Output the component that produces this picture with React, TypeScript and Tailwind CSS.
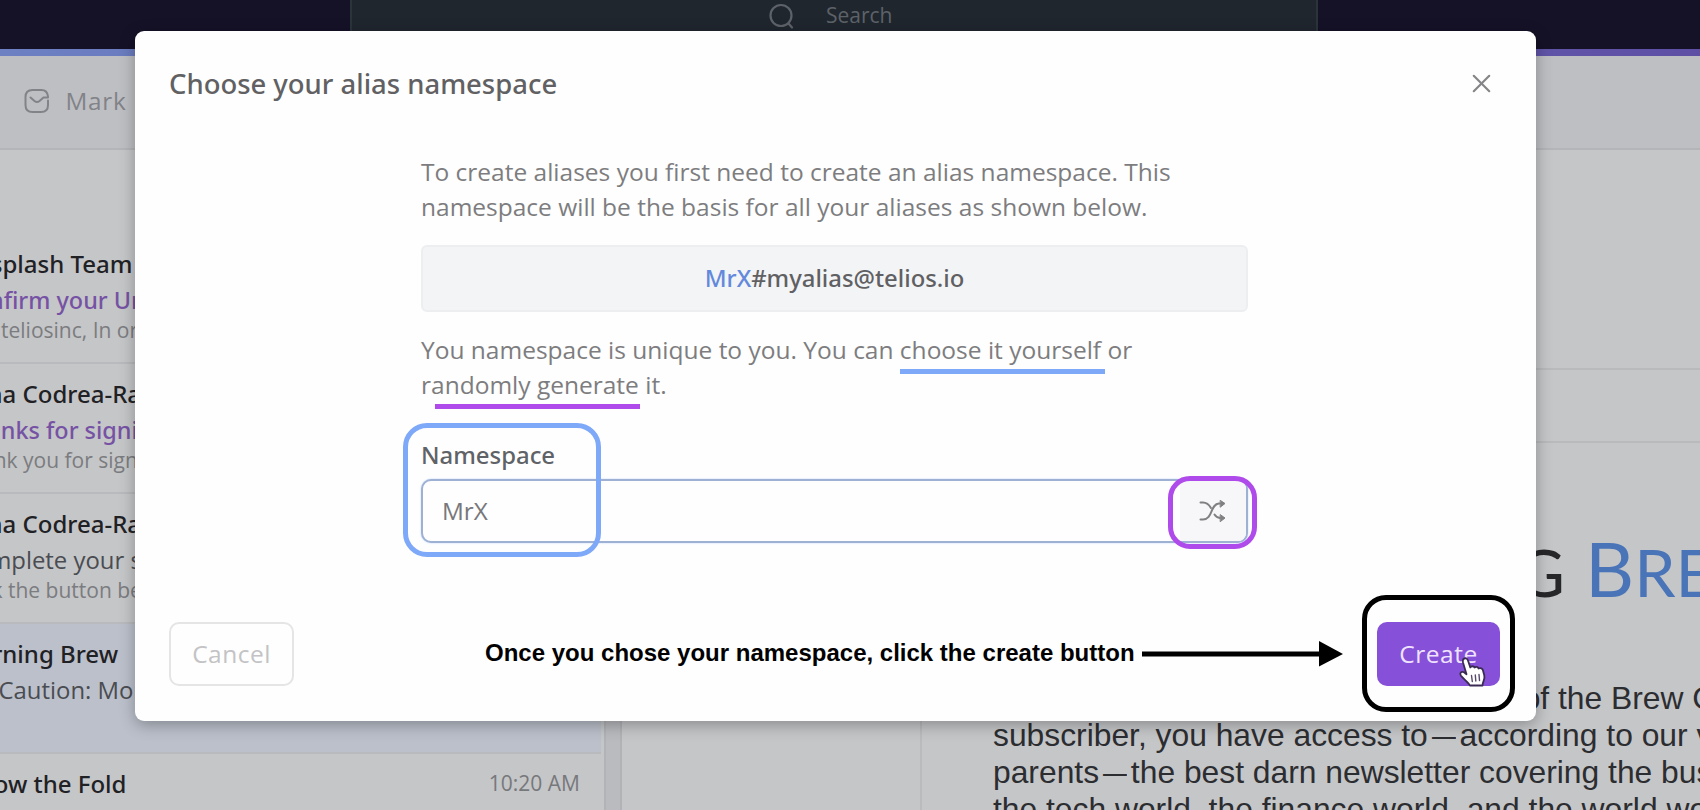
import type { ReactNode } from "react";
import { X } from "lucide-react";

type Line = { before: string; text: string; x: number };
type Message = { sender: Line; subject: Line; preview?: Line; unread?: boolean; selected?: boolean; time?: string };

const messages: Message[] = [
  {
    sender: { before: "Unsplash ", text: "Team", x: 70.5 },
    subject: { before: "Confirm ", text: "your Unsplash account", x: 56.5 },
    preview: { before: "Hi ", text: "teliosinc, In order to", x: 1 },
    unread: true,
  },
  {
    sender: { before: "Ioana ", text: "Codrea-Raducanu", x: 22.5 },
    subject: { before: "Thanks ", text: "for signing up", x: 46 },
    preview: { before: "Thank ", text: "you for signing up", x: 23 },
    unread: true,
  },
  {
    sender: { before: "Ioana ", text: "Codrea-Raducanu", x: 22.5 },
    subject: { before: "Complete ", text: "your signup", x: 73.5 },
    preview: { before: "Click ", text: "the button below", x: 8 },
  },
  {
    sender: { before: "Morning ", text: "Brew", x: 60 },
    subject: { before: "☕ ", text: "Caution: More", x: -1.5 },
    selected: true,
  },
  {
    sender: { before: "Below ", text: "the Fold", x: 33.5 },
    subject: { before: "Sun", text: "day clicks, entertainment for S", x: 36 },
    time: "10:20 AM",
  },
];

function ClippedLine({ line, className }: { line: Line; className: string }) {
  return (
    <div className={`flex whitespace-pre ${className}`}>
      <span className="flex shrink-0 justify-end" style={{ width: Math.max(line.x, 0), marginLeft: Math.min(line.x, 0) }}>
        {line.before}
      </span>
      <span>{line.text}</span>
    </div>
  );
}

function MessageRow({ message }: { message: Message }) {
  const background = message.selected ? "bg-[#bbc0cb]" : "bg-[#c5c6c8]";
  const subject = message.unread ? "font-['Noto_Sans'] text-[23.400px] font-medium text-[#7652a4]" : "text-[23.900px] text-[#4a4c51]";
  return (
    <div className={`flex h-[130px] w-[601px] shrink-0 justify-between border-b-2 border-[#b8babd] pt-[12px] ${background}`}>
      <div className="min-w-0">
        <ClippedLine line={message.sender} className="h-9 font-['Noto_Sans'] text-[24px] leading-9 font-medium text-[#1f2124]" />
        <ClippedLine line={message.subject} className={`mt-px h-[34px] leading-[34px] ${subject}`} />
        {message.preview && <ClippedLine line={message.preview} className="mt-px h-6 text-[21px] leading-6 text-[#7b7c7f]" />}
      </div>
      {message.time && <span className="-mt-px shrink-0 pr-[21px] text-[21px] leading-9 whitespace-nowrap text-[#77787b]">{message.time}</span>}
    </div>
  );
}

function Mailbox() {
  return (
    <div className="flex h-[810px] w-[1700px] flex-col overflow-hidden bg-[#c5c6c8]">
      <header className="flex h-[49px] shrink-0 justify-center bg-[#151127] pr-[32px]">
        <div className="flex h-full w-[968px] border-x-2 border-[#2b333b] bg-[#20262e] pl-[416px]">
          <svg className="mt-[3px] h-[26px] w-[27px] shrink-0" viewBox="0 0 27 26" fill="none" stroke="#5d6269" strokeWidth="2.2" strokeLinecap="round">
            <circle cx="13" cy="12.5" r="10.5" />
            <path d="M20.5 20.5 24 24.5" />
          </svg>
          <span className="mt-[1px] ml-[31px] text-[21px] leading-[28px] text-[#5d6269]">Search</span>
        </div>
      </header>
      <div className="h-[7px] shrink-0 bg-linear-to-r from-[#6c80c2] to-[#5e4fa5]" />
      <div className="flex h-[94px] shrink-0 items-center border-b-2 border-[#b4b5b9] bg-[#bebfc3] pb-[2px] pl-[24px]">
        <svg className="h-[26px] w-[26px]" viewBox="0 0 26 26" fill="none" stroke="#828388" strokeWidth="2" strokeLinecap="round" strokeLinejoin="round">
          <path d="M24 8.500C23.500 4 21.500 2 17.500 2H8.500C4 2 1.500 4.500 1.500 9V17C1.500 21.500 4 24 8.500 24H17C21.500 24 24 21.500 24 17V12.500" />
          <path d="M6.500 9.500 10.500 13Q13 15 15.500 13L19.500 9.500H24" />
        </svg>
        <span className="ml-[15.500px] text-[24.300px] tracking-[0.700px] text-[#828388]">Mark</span>
      </div>
      <div className="flex min-h-0 flex-1">
        <div className="flex w-[604px] flex-col overflow-hidden pt-[84px]">
          {messages.map((message, index) => (
            <MessageRow key={index} message={message} />
          ))}
        </div>
        <div className="w-[18px] border-x-2 border-[#b1b3b7] bg-[#babbbf]" />
        <div className="flex min-w-0 flex-1 flex-col">
          <div className="h-[220px] shrink-0 border-b-2 border-[#b8babc]" />
          <div className="h-[73px] shrink-0 border-b-2 border-[#b8babc]" />
          <div className="ml-[298px] min-h-0 flex-1 overflow-hidden border-l-2 border-[#babbbe] pt-[85px] pl-[71px]">
            <div className="flex h-[80px] items-baseline font-['Lato'] text-[66px] leading-[80px] whitespace-pre text-[#27272a]">
              <span className="flex w-[572px] shrink-0 items-baseline justify-end">
                <span className="text-[76px]">M</span>ORNING
              </span>
              <span className="ml-[20px] shrink-0 text-[#4a74b8]">
                <span className="text-[76px]">B</span>REW
              </span>
            </div>
            <div className="mt-[72px] font-['Liberation_Sans'] text-[31.800px] leading-[37px] whitespace-pre text-[#2c2d30]">
              <div className="flex">
                <span className="flex w-[565px] shrink-0 justify-end">Congrats on becoming a part of </span>
                <span>the Brew Crew.</span>
              </div>
              <div>subscriber, you have access to<Dash />according to our very</div>
              <div>parents<Dash />the best darn newsletter covering the business</div>
              <div>the tech world, the finance world, and the world world</div>
            </div>
          </div>
        </div>
      </div>
    </div>
  );
}

function Dash() {
  return <span className="inline-block scale-x-75">—</span>;
}

function ShuffleIcon() {
  return (
    <svg className="h-[24px] w-[28px]" viewBox="0 0 28 24" fill="none" stroke="#808083" strokeWidth="2" strokeLinecap="round">
      <path d="M1.500 3.500H4C8 3.500 10 5.500 12 9" />
      <path d="M1.500 20.500H4C14 20.500 11 5 20 4.500H21" />
      <path d="M15.500 15.500C17 18 18.500 18.800 21 19" />
      <path d="M21.500 1.500 26 4.500 21.500 8ZM21.500 15.800 26 19 21.500 22.500Z" fill="#808083" strokeWidth="1" />
    </svg>
  );
}

function AliasDialog() {
  return (
    <section className="flex h-[690px] w-[1401px] flex-col rounded-[9px] bg-[#fefefe] pt-[35px] pr-[36px] pb-[35px] pl-[34px] shadow-[0_4px_16px_rgba(0,0,0,0.300)]">
      <div className="flex h-9 items-center justify-between">
        <h1 className="font-['Noto_Sans'] text-[27.450px] leading-9 font-medium text-[#616163]">Choose your alias namespace</h1>
        <X size={31} strokeWidth={1.6} className="mr-[3px] mb-[1px] text-[#858587]" />
      </div>
      <div className="mt-[52px] ml-[252px] w-[827px] text-[24.510px] leading-[35px] text-[#7d7d7f]">
        <p className="h-[70px] whitespace-nowrap">
          To create aliases you first need to create an alias namespace. This
          <br />
          namespace will be the basis for all your aliases as shown below.
        </p>
        <div className="mt-[21px] flex h-[67px] items-center justify-center rounded-md border-2 border-[#eceef0] bg-[#f3f4f6] font-['Noto_Sans'] text-[23.850px] text-[#606063]">
          <span className="font-medium text-[#6289dc]">MrX</span>
          <span className="font-medium">#myalias@telios.io</span>
        </div>
        <p className="mt-[20px]">
          You namespace is unique to you. You can choose it yourself or
          <br />
          randomly generate it.
        </p>
        <label className="mt-[36px] block h-[34px] font-['Noto_Sans'] text-[23.900px] leading-[34px] font-medium text-[#5f6267]">Namespace</label>
        <div className="mt-[7px] flex h-[64px] items-center justify-between overflow-hidden rounded-[10px] border-[2.500px] border-[#9fb1d3] bg-[#fefefe] pl-[19px] shadow-[0_0_2px_#bcd3ff]">
          <span className="pb-[2px] text-[24.300px] text-[#78787a]">MrX</span>
          <span className="flex h-full w-[66px] items-center justify-center bg-[#f7f7fa]">
            <ShuffleIcon />
          </span>
        </div>
      </div>
      <div className="mt-auto flex h-[64px] justify-between text-[24.500px] tracking-[0.500px]">
        <div className="flex w-[125px] items-center justify-center rounded-[10px] border-2 border-[#e5e5e6] text-[#c3c3c5]">Cancel</div>
        <div className="flex w-[123px] items-center justify-center rounded-[10px] bg-[#8650d9] text-[#f0e3ff]">Create</div>
      </div>
    </section>
  );
}

function Mark({ className, children }: { className: string; children?: ReactNode }) {
  return <div className={`absolute ${className}`}>{children}</div>;
}

function Annotations() {
  return (
    <>
      <Mark className="top-[369px] left-[900px] h-[5px] w-[205px] bg-[#7ea8f8]" />
      <Mark className="top-[404px] left-[435px] h-[5px] w-[205px] bg-[#af4bea]" />
      <Mark className="top-[423px] left-[403px] h-[134px] w-[198px] rounded-[24px] border-5 border-[#7ea8f8]" />
      <Mark className="top-[476px] left-[1168px] h-[73px] w-[89px] rounded-[22px] border-5 border-[#af4bea]" />
      <Mark className="top-[595px] left-[1362px] h-[117px] w-[153px] rounded-[24px] border-5 border-black" />
      <Mark className="top-[637px] left-[485px] font-['Liberation_Sans'] text-[24px] leading-8 font-bold whitespace-nowrap text-black">
        Once you chose your namespace, click the create button
      </Mark>
      <Mark className="top-[641px] left-[1142px]">
        <svg width="202" height="26" viewBox="0 0 202 26">
          <path d="M0 10.500H177V0L201 13 177 25.500V15.500H0Z" />
        </svg>
      </Mark>
      <Mark className="top-[656px] left-[1458px]">
        <svg width="30" height="32" viewBox="0 0 30 32" strokeLinejoin="round" strokeLinecap="round">
          <path
            d="M5.500 3C7.300 1.500 9.300 2.300 10 4.500L12.300 11.500C13 9.800 15.800 9.800 16.500 11.500 17.800 10.300 20 10.800 20.500 12.500 22.500 11.500 24.500 12.500 25 14.500L26.300 19.500C27.300 23.500 24.500 25.500 24.500 29.500H12C10.500 26.500 5.500 23 2.800 19.500 1.300 17 3.500 15 6 16.300L8.500 18.300 5 6.500C4.600 5 4.700 3.800 5.500 3Z"
            fill="#fff"
            stroke="#3a2b52"
            strokeWidth="1.800"
          />
          <path d="M13.500 19.500 14.300 25.500M17.300 19 17.800 25M21 18.500 21.500 24.500" fill="none" stroke="#55486a" strokeWidth="1.400" />
        </svg>
      </Mark>
    </>
  );
}

export default function App() {
  return (
    <main className="relative h-[810px] w-[1700px] overflow-hidden font-['Open_Sans',sans-serif]">
      <Mailbox />
      <div className="absolute inset-0 flex items-start pt-[31px] pl-[135px]">
        <AliasDialog />
      </div>
      <Annotations />
    </main>
  );
}
